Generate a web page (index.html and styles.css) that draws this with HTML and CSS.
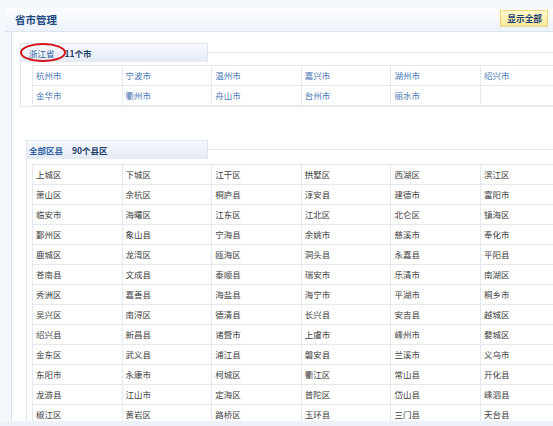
FILE: index.html
```html
<!DOCTYPE html>
<html lang="zh">
<head>
<meta charset="utf-8">
<title>省市管理</title>
<link rel="stylesheet" href="styles.css">
</head>
<body>
<div class="page">
  <div class="titlebar">
    <span class="title">省市管理</span>
    <span class="btn">显示全部</span>
  </div>
  <div class="content">
    <div class="group g1">
      <div class="tabrow">
        <div class="tab">
          <span class="prov">浙江省</span><span class="count">11个市</span>
          <span class="mark"></span>
        </div>
        <div class="tabline"></div>
      </div>
      <div class="gbody">
        <div class="grid links">
          <div class="cell">杭州市</div><div class="cell">宁波市</div><div class="cell">温州市</div><div class="cell">嘉兴市</div><div class="cell">湖州市</div><div class="cell">绍兴市</div>
          <div class="cell">金华市</div><div class="cell">衢州市</div><div class="cell">舟山市</div><div class="cell">台州市</div><div class="cell">丽水市</div><div class="cell"></div>
        </div>
      </div>
    </div>

    <div class="group g2">
      <div class="tabrow">
        <div class="tab">
          <span class="prov all">全部区县</span><span class="count">90个县区</span>
        </div>
        <div class="tabline"></div>
      </div>
      <div class="gbody">
        <div class="grid plain">
          <div class="cell">上城区</div><div class="cell">下城区</div><div class="cell">江干区</div><div class="cell">拱墅区</div><div class="cell">西湖区</div><div class="cell">滨江区</div>
          <div class="cell">萧山区</div><div class="cell">余杭区</div><div class="cell">桐庐县</div><div class="cell">淳安县</div><div class="cell">建德市</div><div class="cell">富阳市</div>
          <div class="cell">临安市</div><div class="cell">海曙区</div><div class="cell">江东区</div><div class="cell">江北区</div><div class="cell">北仑区</div><div class="cell">镇海区</div>
          <div class="cell">鄞州区</div><div class="cell">象山县</div><div class="cell">宁海县</div><div class="cell">余姚市</div><div class="cell">慈溪市</div><div class="cell">奉化市</div>
          <div class="cell">鹿城区</div><div class="cell">龙湾区</div><div class="cell">瓯海区</div><div class="cell">洞头县</div><div class="cell">永嘉县</div><div class="cell">平阳县</div>
          <div class="cell">苍南县</div><div class="cell">文成县</div><div class="cell">泰顺县</div><div class="cell">瑞安市</div><div class="cell">乐清市</div><div class="cell">南湖区</div>
          <div class="cell">秀洲区</div><div class="cell">嘉善县</div><div class="cell">海盐县</div><div class="cell">海宁市</div><div class="cell">平湖市</div><div class="cell">桐乡市</div>
          <div class="cell">吴兴区</div><div class="cell">南浔区</div><div class="cell">德清县</div><div class="cell">长兴县</div><div class="cell">安吉县</div><div class="cell">越城区</div>
          <div class="cell">绍兴县</div><div class="cell">新昌县</div><div class="cell">诸暨市</div><div class="cell">上虞市</div><div class="cell">嵊州市</div><div class="cell">婺城区</div>
          <div class="cell">金东区</div><div class="cell">武义县</div><div class="cell">浦江县</div><div class="cell">磐安县</div><div class="cell">兰溪市</div><div class="cell">义乌市</div>
          <div class="cell">东阳市</div><div class="cell">永康市</div><div class="cell">柯城区</div><div class="cell">衢江区</div><div class="cell">常山县</div><div class="cell">开化县</div>
          <div class="cell">龙游县</div><div class="cell">江山市</div><div class="cell">定海区</div><div class="cell">普陀区</div><div class="cell">岱山县</div><div class="cell">嵊泗县</div>
          <div class="cell">椒江区</div><div class="cell">黄岩区</div><div class="cell">路桥区</div><div class="cell">玉环县</div><div class="cell">三门县</div><div class="cell">天台县</div>
        </div>
      </div>
    </div>
  </div>
</div>
</body>
</html>
```
FILE: styles.css
```css
html, body {
  margin: 0;
  padding: 0;
}
body {
  width: 553px;
  height: 426px;
  overflow: hidden;
  background: #edf2f9;
  font-family: "Noto Sans CJK SC", "Noto Sans", sans-serif;
  font-size: 8.5px;
  color: #3c3c3c;
}
.page {
  height: 421px;
  box-sizing: border-box;
  padding: 8px 0 0 5px;
  background: #f4f7fc;
  display: flex;
  flex-direction: column;
  overflow: hidden;
}
.titlebar {
  height: 23px;
  flex: none;
  display: flex;
  align-items: center;
  justify-content: space-between;
  padding: 0 5px 0 10px;
  background: linear-gradient(#fbfcfe, #eef3fa);
  border-bottom: 1px solid #dbe4ef;
}
.title {
  font-size: 10.5px;
  font-weight: bold;
  color: #1d4a80;
}
.btn {
  align-self: flex-start;
  margin-top: 2px;
  height: 16px;
  line-height: 15px;
  box-sizing: border-box;
  padding: 0 5px 0 6px;
  font-size: 8.7px;
  font-weight: bold;
  color: #1c3f73;
  background: linear-gradient(#fff8cc, #fcec9e);
  border: 1px solid #efd77e;
  box-shadow: 0 1px 1px #e8e0b8;
}
.content {
  flex: 1;
  margin-left: 6px;
  background: #ffffff;
  border-left: 1px solid #dce4ee;
  padding: 11px 0 0 8px;
  overflow: hidden;
}
.tabrow {
  display: flex;
  height: 19px;
}
.tab {
  position: relative;
  height: 19px;
  box-sizing: border-box;
  display: flex;
  align-items: center;
  background: linear-gradient(#f6f9fd, #e4ebf5);
  border: 1px solid #dfe6f0;
  border-bottom: none;
}
.tabline {
  flex: 1;
  align-self: center;
  border-top: 1px solid #e2e8f0;
}
.prov {
  color: #2f5f9e;
}
.prov.all {
  font-weight: bold;
  color: #3565a6;
}
.count {
  margin-left: 10px;
  font-weight: bold;
  color: #1f3d69;
}
.mark {
  position: absolute;
  left: -1px;
  top: -1px;
  width: 46px;
  height: 19px;
  box-sizing: border-box;
  border: 2px solid #d4161c;
  border-radius: 50%;
}
.g1 .tab {
  width: 188px;
  padding-left: 8px;
}
.g1 .gbody {
  border-left: 1px solid #e0e6ee;
  border-bottom: 1px solid #e4e9f0;
  padding: 3px 0 0 11px;
}
.g2 {
  margin-top: 33px;
  margin-left: 6px;
}
.g2 .tab {
  width: 182px;
  padding-left: 2px;
}
.g2 .count {
  margin-left: 9px;
}
.g2 .gbody {
  border-left: 1px solid #e0e6ee;
  padding: 5px 0 0 5px;
}
.grid {
  display: grid;
  grid-template-columns: repeat(6, 89.6px);
  border-top: 1px solid #e4e9f0;
  border-left: 1px solid #e4e9f0;
  width: max-content;
}
.cell {
  height: 20px;
  box-sizing: border-box;
  border-right: 1px solid #e4e9f0;
  border-bottom: 1px solid #e4e9f0;
  padding-left: 3px;
  line-height: 19px;
  white-space: nowrap;
}
.links .cell {
  color: #4676b4;
}
.plain .cell {
  color: #3e3e3e;
}
```
